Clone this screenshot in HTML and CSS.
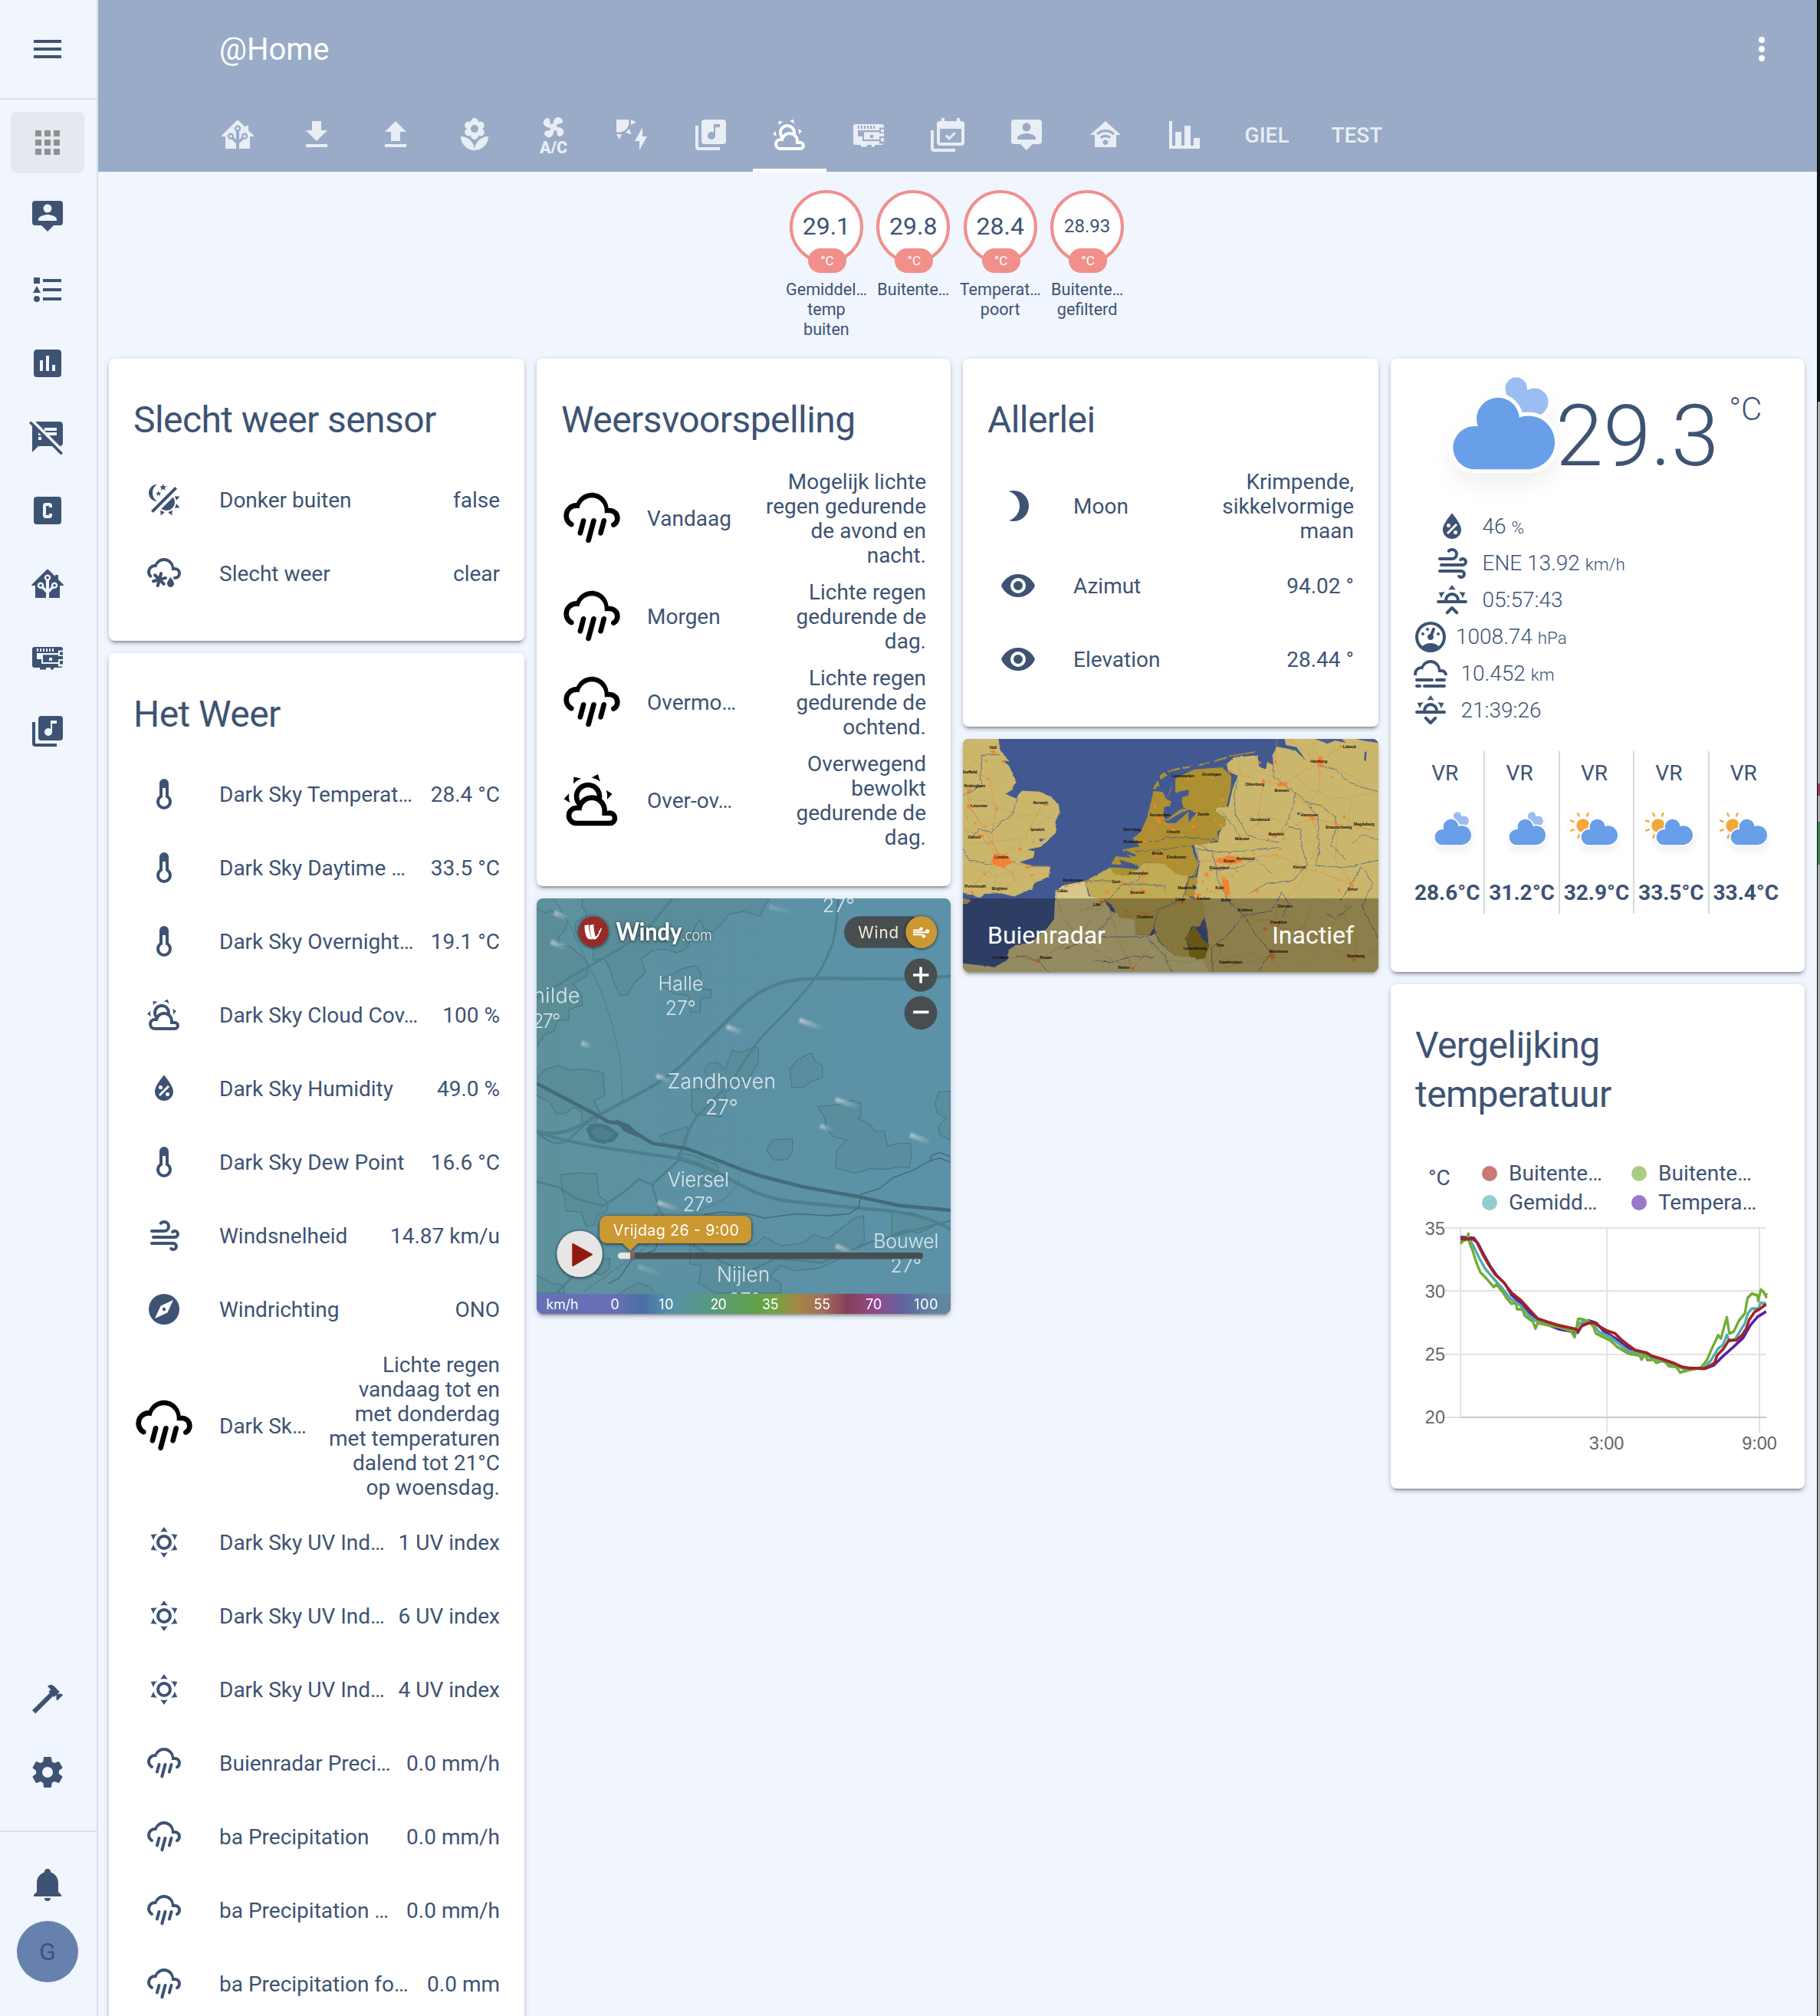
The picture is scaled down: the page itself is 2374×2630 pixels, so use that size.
FILE: index.html
```html
<!DOCTYPE html>
<html lang="nl">
<head>
<meta charset="utf-8">
<title>@Home</title>
<link rel="stylesheet" href="styles.css">
</head>
<body>
<svg class="sprite" aria-hidden="true">
<symbol id="menu" viewBox="0 0 24 24"><path d="M3,6H21V8H3V6M3,11H21V13H3V11M3,16H21V18H3V16Z"/></symbol>
<symbol id="apps" viewBox="0 0 24 24"><path d="M16,20H20V16H16M16,14H20V10H16M10,8H14V4H10M16,8H20V4H16M10,14H14V10H10M4,14H8V10H4M4,20H8V16H4M10,20H14V16H10M4,8H8V4H4V8Z"/></symbol>
<symbol id="account" viewBox="0 0 24 24"><path d="M20,2H4A2,2 0 0,0 2,4V16A2,2 0 0,0 4,18H8L12,22L16,18H20A2,2 0 0,0 22,16V4A2,2 0 0,0 20,2M12,4.3C13.5,4.3 14.7,5.5 14.7,7C14.7,8.5 13.5,9.7 12,9.7C10.5,9.7 9.3,8.5 9.3,7C9.3,5.5 10.5,4.3 12,4.3M18,15H6V14.1C6,12.1 10,11 12,11C14,11 18,12.1 18,14.1V15Z"/></symbol>
<symbol id="list" viewBox="0 0 24 24"><path d="M5,9.5L7.5,14H2.5L5,9.5M3,4H7V8H3V4M5,20A2,2 0 0,0 7,18A2,2 0 0,0 5,16A2,2 0 0,0 3,18A2,2 0 0,0 5,20M9,5V7H21V5H9M9,19H21V17H9V19M9,13H21V11H9V13Z"/></symbol>
<symbol id="poll" viewBox="0 0 24 24"><path d="M19,3H5C3.89,3 3,3.89 3,5V19A2,2 0 0,0 5,21H19A2,2 0 0,0 21,19V5C21,3.89 20.1,3 19,3M9,17H7V10H9V17M13,17H11V7H13V17M17,17H15V13H17V17Z"/></symbol>
<symbol id="notes-off" viewBox="0 0 24 24"><path d="M10.54 11l-.54-.54L7.54 8 6 6.46 2.38 2.84 1.27 1.73 0 3l2.01 2.01L2 22l4-4h9l5.73 5.73L22 22.46 17.54 18l-7-7zM8 14H6v-2h2v2zm-2-3V9l2 2H6zm14-9H4.08L10 7.92V6h8v2h-7.92l1 1H18v2h-4.92l6.99 6.99C21.14 17.95 22 17.08 22 16V4c0-1.1-.9-2-2-2z"/></symbol>
<symbol id="c-box" viewBox="0 0 24 24"><path d="M3,5A2,2 0 0,1 5,3H19A2,2 0 0,1 21,5V19A2,2 0 0,1 19,21H5A2,2 0 0,1 3,19V5M11,7A2,2 0 0,0 9,9V15A2,2 0 0,0 11,17H13A2,2 0 0,0 15,15V14H13V15H11V9H13V10H15V9A2,2 0 0,0 13,7H11Z"/></symbol>
<symbol id="hass" viewBox="0 0 24 24"><path d="M21.8,13H20V21H13V17.67L15.79,14.88L16.5,15C17.66,15 18.6,14.06 18.6,12.9C18.6,11.74 17.66,10.8 16.5,10.8A2.1,2.1 0 0,0 14.4,12.9L14.5,13.61L13,15.13V9.65C13.66,9.29 14.1,8.6 14.1,7.8A2.1,2.1 0 0,0 12,5.7A2.1,2.1 0 0,0 9.9,7.8C9.9,8.6 10.34,9.29 11,9.65V15.13L9.5,13.61L9.6,12.9A2.1,2.1 0 0,0 7.5,10.8A2.1,2.1 0 0,0 5.4,12.9A2.1,2.1 0 0,0 7.5,15L8.21,14.88L11,17.67V21H4V13H2.25C1.83,13 1.42,13 1.42,12.79C1.43,12.57 1.85,12.15 2.28,11.72L11,3C11.33,2.67 11.67,2.33 12,2.33C12.33,2.33 12.67,2.67 13,3L17,7V6H19V9L21.78,11.78C22.18,12.18 22.59,12.59 22.6,12.8C22.6,13 22.2,13 21.8,13M7.5,12A0.9,0.9 0 0,1 8.4,12.9A0.9,0.9 0 0,1 7.5,13.8A0.9,0.9 0 0,1 6.6,12.9A0.9,0.9 0 0,1 7.5,12M16.5,12C17,12 17.4,12.4 17.4,12.9C17.4,13.4 17,13.8 16.5,13.8A0.9,0.9 0 0,1 15.6,12.9A0.9,0.9 0 0,1 16.5,12M12,6.9C12.5,6.9 12.9,7.3 12.9,7.8C12.9,8.3 12.5,8.7 12,8.7C11.5,8.7 11.1,8.3 11.1,7.8C11.1,7.3 11.5,6.9 12,6.9Z"/></symbol>
<symbol id="card" viewBox="0 0 24 24"><path fill-rule="evenodd" d="M3.5,5H20.5A1.5,1.5 0 0,1 22,6.5V7.3H19V9H5V13H8V16H19V17.7H22V16.7A1.5,1.5 0 0,1 20.5,18.5H16V19.8H14V18.5H11V19.8H7V18.5H3.5A1.5,1.5 0 0,1 2,17V6.5A1.5,1.5 0 0,1 3.5,5M5,6V8H6V6M7,6V8H8V6M9,6V8H10V6M11,6V8H12V6M13,6V8H14V6M15,6V8H16V6M9,10.1H19V11H22V13H19V15H9M13,12V14H15V12M20,8.2H22V10.2H20M20,14H22V16.2H20Z"/></symbol>
<symbol id="music" viewBox="0 0 24 24"><path d="M4,6H2V20A2,2 0 0,0 4,22H18V20H4M18,7H15V12.5A2.5,2.5 0 0,1 12.5,15A2.5,2.5 0 0,1 10,12.5A2.5,2.5 0 0,1 12.5,10C13.07,10 13.58,10.19 14,10.5V5H18M20,2H8A2,2 0 0,0 6,4V16A2,2 0 0,0 8,18H20A2,2 0 0,0 22,16V4A2,2 0 0,0 20,2Z"/></symbol>
<symbol id="hammer" viewBox="0 0 24 24"><path d="M2,19.63L13.43,8.2L12.72,7.5L14.14,6.07L12,3.89C13.2,2.7 15.09,2.7 16.27,3.89L19.87,7.5L18.45,8.91H21.29L22,9.62L18.45,13.21L17.74,12.5V9.62L16.27,11.04L15.56,10.33L4.13,21.76L2,19.63Z"/></symbol>
<symbol id="cog" viewBox="0 0 24 24"><path d="M12,15.5A3.5,3.5 0 0,1 8.5,12A3.5,3.5 0 0,1 12,8.5A3.5,3.5 0 0,1 15.5,12A3.5,3.5 0 0,1 12,15.5M19.43,12.97C19.47,12.65 19.5,12.33 19.5,12C19.5,11.67 19.47,11.34 19.43,11L21.54,9.37C21.73,9.22 21.78,8.95 21.66,8.73L19.66,5.27C19.54,5.05 19.27,4.96 19.05,5.05L16.56,6.05C16.04,5.66 15.5,5.32 14.87,5.07L14.5,2.42C14.46,2.18 14.25,2 14,2H10C9.75,2 9.54,2.18 9.5,2.42L9.13,5.07C8.5,5.32 7.96,5.66 7.44,6.05L4.95,5.05C4.73,4.96 4.46,5.05 4.34,5.27L2.34,8.73C2.21,8.95 2.27,9.22 2.46,9.37L4.57,11C4.53,11.34 4.5,11.67 4.5,12C4.5,12.33 4.53,12.65 4.57,12.97L2.46,14.63C2.27,14.78 2.21,15.05 2.34,15.27L4.34,18.73C4.46,18.95 4.73,19.03 4.95,18.95L7.44,17.94C7.96,18.34 8.5,18.68 9.13,18.93L9.5,21.58C9.54,21.82 9.75,22 10,22H14C14.25,22 14.46,21.82 14.5,21.58L14.87,18.93C15.5,18.67 16.04,18.34 16.56,17.94L19.05,18.95C19.27,19.03 19.54,18.95 19.66,18.73L21.66,15.27C21.78,15.05 21.73,14.78 21.54,14.63L19.43,12.97Z"/></symbol>
<symbol id="bell" viewBox="0 0 24 24"><path d="M21,19V20H3V19L5,17V11C5,7.9 7.03,5.17 10,4.29C10,4.19 10,4.1 10,4A2,2 0 0,1 12,2A2,2 0 0,1 14,4C14,4.1 14,4.19 14,4.29C16.97,5.17 19,7.9 19,11V17L21,19M14,21A2,2 0 0,1 12,23A2,2 0 0,1 10,21"/></symbol>
<symbol id="dots" viewBox="0 0 24 24"><path d="M12,16A2,2 0 0,1 14,18A2,2 0 0,1 12,20A2,2 0 0,1 10,18A2,2 0 0,1 12,16M12,10A2,2 0 0,1 14,12A2,2 0 0,1 12,14A2,2 0 0,1 10,12A2,2 0 0,1 12,10M12,4A2,2 0 0,1 14,6A2,2 0 0,1 12,8A2,2 0 0,1 10,6A2,2 0 0,1 12,4Z"/></symbol>
<symbol id="download" viewBox="0 0 24 24"><path d="M5,20H19V18H5M19,9H15V3H9V9H5L12,16L19,9Z"/></symbol>
<symbol id="upload" viewBox="0 0 24 24"><path d="M9,16V10H5L12,3L19,10H15V16H9M5,20V18H19V20H5Z"/></symbol>
<symbol id="flower" viewBox="0 0 24 24"><path d="M3,13A9,9 0 0,0 12,22C12,17 7.97,13 3,13M12,5.5A2.5,2.5 0 0,1 14.5,8A2.5,2.5 0 0,1 12,10.5A2.5,2.5 0 0,1 9.5,8A2.5,2.5 0 0,1 12,5.5M5.6,10.25A2.5,2.5 0 0,0 8.1,12.75C8.63,12.75 9.12,12.58 9.5,12.31C9.5,12.37 9.5,12.43 9.5,12.5A2.5,2.5 0 0,0 12,15A2.5,2.5 0 0,0 14.5,12.5C14.5,12.43 14.5,12.37 14.5,12.31C14.88,12.58 15.37,12.75 15.9,12.75C17.28,12.75 18.4,11.63 18.4,10.25C18.4,9.25 17.81,8.4 16.97,8C17.81,7.6 18.4,6.74 18.4,5.75C18.4,4.37 17.28,3.25 15.9,3.25C15.37,3.25 14.88,3.41 14.5,3.69C14.5,3.63 14.5,3.56 14.5,3.5A2.5,2.5 0 0,0 12,1A2.5,2.5 0 0,0 9.5,3.5C9.5,3.56 9.5,3.63 9.5,3.69C9.12,3.41 8.63,3.25 8.1,3.25A2.5,2.5 0 0,0 5.6,5.75C5.6,6.74 6.19,7.6 7.03,8C6.19,8.4 5.6,9.25 5.6,10.25M12,22A9,9 0 0,0 21,13C16,13 12,17 12,22Z"/></symbol>
<symbol id="airco" viewBox="0 0 24 24"><path transform="translate(12 7) rotate(32) scale(.76) translate(-12 -12)" d="M12.5,2C17,2 17.11,5.57 14.75,6.75C13.76,7.24 13.32,8.29 13.13,9.22C13.61,9.42 14.03,9.73 14.35,10.13C18.05,8.13 22.03,8.92 22.03,12.5C22.03,17 18.46,17.1 17.28,14.73C16.78,13.74 15.72,13.3 14.79,13.11C14.59,13.59 14.28,14 13.88,14.34C15.87,18.03 15.08,22 11.5,22C7,22 6.91,18.42 9.27,17.24C10.25,16.75 10.69,15.71 10.89,14.79C10.4,14.59 9.97,14.27 9.65,13.87C5.96,15.85 2,15.07 2,11.5C2,7 5.56,6.89 6.74,9.26C7.24,10.25 8.29,10.68 9.22,10.87C9.41,10.39 9.73,9.97 10.14,9.65C8.15,5.96 8.94,2 12.5,2Z"/><text x="3" y="23.9" font-size="11" font-weight="900" textLength="18" lengthAdjust="spacingAndGlyphs">A/C</text></symbol>
<symbol id="solar" viewBox="0 0 24 24"><path d="M11.45,2V5.55L15,3.77L11.45,2M10.45,8L8,10.46L11.75,11.71L10.45,8M2,11.45L3.77,15L5.55,11.45H2M10,2H2V10C2.57,10.17 3.17,10.25 3.77,10.25C7.35,10.26 10.26,7.35 10.27,3.75C10.26,3.16 10.17,2.57 10,2M17,22V16H14L19,7V13H22L17,22Z"/></symbol>
<symbol id="partly" viewBox="0 0 24 24"><path d="M12.74,5.47C15.1,6.5 16.35,9.03 15.92,11.46C17.19,12.56 18,14.19 18,16V16.17C18.31,16.06 18.65,16 19,16A3,3 0 0,1 22,19A3,3 0 0,1 19,22H6A4,4 0 0,1 2,18A4,4 0 0,1 6,14H6.27C5,12.45 4.6,10.24 5.5,8.26C6.72,5.5 9.97,4.24 12.74,5.47M11.93,7.3C10.16,6.5 8.09,7.31 7.31,9.07C6.85,10.09 6.93,11.22 7.41,12.13C8.5,10.83 10.16,10 12,10C12.7,10 13.38,10.12 14,10.34C13.94,9.06 13.18,7.86 11.93,7.3M13.55,3.64C13,3.4 12.45,3.23 11.88,3.12L14.37,1.82L15.27,4.71C14.76,4.29 14.19,3.93 13.55,3.64M6.09,4.44C5.6,4.79 5.17,5.19 4.8,5.63L4.91,2.82L7.87,3.5C7.25,3.71 6.65,4.03 6.09,4.44M18,9.71C17.91,9.12 17.78,8.55 17.59,8L19.97,9.5L17.92,11.73C18.03,11.08 18.05,10.4 18,9.71M3.04,11.3C3.11,11.9 3.24,12.47 3.43,13L1.06,11.5L3.1,9.28C3,9.93 2.97,10.61 3.04,11.3M19,18H16V16A4,4 0 0,0 12,12A4,4 0 0,0 8,16H6A2,2 0 0,0 4,18A2,2 0 0,0 6,20H19A1,1 0 0,0 20,19A1,1 0 0,0 19,18Z"/></symbol>
<symbol id="calendar" viewBox="0 0 24 24"><path d="M21,17V8H7V17H21M21,3A2,2 0 0,1 23,5V17A2,2 0 0,1 21,19H7C5.89,19 5,18.1 5,17V5A2,2 0 0,1 7,3H8V1H10V3H18V1H20V3H21M17.53,11.06L13.09,15.5L10.41,12.82L11.47,11.76L13.09,13.38L16.47,10L17.53,11.06M3,21H17V23H3C1.89,23 1,22.1 1,21V9H3V21Z"/></symbol>
<symbol id="home-auto" viewBox="0 0 24 24"><path d="M12,3L2,12H5V20H19V12H22L12,3M12,8.5C14.34,8.5 16.46,9.43 18,10.94L16.8,12.12C15.58,10.91 13.88,10.17 12,10.17C10.12,10.17 8.42,10.91 7.2,12.12L6,10.94C7.54,9.43 9.66,8.5 12,8.5M12,11.83C13.4,11.83 14.67,12.39 15.6,13.3L14.4,14.47C13.79,13.87 12.94,13.5 12,13.5C11.06,13.5 10.21,13.87 9.6,14.47L8.4,13.3C9.33,12.39 10.6,11.83 12,11.83M12,15.17C12.94,15.17 13.7,15.91 13.7,16.83C13.7,17.75 12.94,18.5 12,18.5C11.06,18.5 10.3,17.75 10.3,16.83C10.3,15.91 11.06,15.17 12,15.17Z"/></symbol>
<symbol id="chart" viewBox="0 0 24 24"><path d="M22,21H2V3H4V19H6V10H10V19H12V6H16V19H18V14H22V21Z"/></symbol>
<symbol id="day-night" viewBox="0 0 24 24"><path d="M7.5,2C5.71,3.15 4.5,5.18 4.5,7.5C4.5,9.82 5.71,11.85 7.53,13C4.46,13 2,10.54 2,7.5A5.5,5.5 0 0,1 7.5,2M19.07,3.5L20.5,4.93L4.93,20.5L3.5,19.07L19.07,3.5M12.89,5.93L11.41,5L9.97,6L10.39,4.3L9,3.24L10.75,3.12L11.33,1.47L12,3.1L13.73,3.13L12.38,4.26L12.89,5.93M9.59,9.54L8.43,8.81L7.31,9.59L7.65,8.27L6.56,7.44L7.92,7.35L8.37,6.06L8.88,7.33L10.24,7.36L9.19,8.23L9.59,9.54M19,13.5A5.5,5.5 0 0,1 13.5,19C12.28,19 11.15,18.6 10.24,17.93L17.93,10.24C18.6,11.15 19,12.28 19,13.5M14.6,20.08L17.37,18.93L17.13,22.28L14.6,20.08M18.93,17.38L20.08,14.61L22.28,17.15L18.93,17.38M20.08,12.42L18.94,9.64L22.28,9.88L20.08,12.42M9.63,18.93L12.4,20.08L9.87,22.27L9.63,18.93Z"/></symbol>
<symbol id="snow-rain" viewBox="0 0 24 24"><path d="M18.5,18.67C18.5,19.96 17.5,21 16.25,21C15,21 14,19.96 14,18.67C14,17.12 16.25,14.5 16.25,14.5C16.25,14.5 18.5,17.12 18.5,18.67M4,17.36C3.86,16.82 4.18,16.25 4.73,16.11L7,15.5L5.33,13.86C4.93,13.46 4.93,12.81 5.33,12.4C5.73,12 6.4,12 6.79,12.4L8.45,14.05L9.04,11.8C9.18,11.24 9.75,10.92 10.29,11.07C10.85,11.21 11.17,11.78 11,12.33L10.42,14.58L12.67,14C13.22,13.83 13.79,14.15 13.93,14.71C14.08,15.25 13.76,15.82 13.2,15.96L10.95,16.55L12.6,18.21C13,18.6 13,19.27 12.6,19.67C12.2,20.07 11.54,20.07 11.15,19.67L9.5,18L8.89,20.27C8.75,20.83 8.18,21.14 7.64,21C7.08,20.86 6.77,20.29 6.91,19.74L7.5,17.5L5.26,18.09C4.71,18.23 4.14,17.92 4,17.36M1,11A5,5 0 0,1 6,6C7,3.65 9.3,2 12,2C15.43,2 18.24,4.66 18.5,8.03L19,8A4,4 0 0,1 23,12A4,4 0 0,1 19,16A1,1 0 0,1 18,15A1,1 0 0,1 19,14A2,2 0 0,0 21,12A2,2 0 0,0 19,10H17V9A5,5 0 0,0 12,4C9.5,4 7.45,5.82 7.06,8.19C6.73,8.07 6.37,8 6,8A3,3 0 0,0 3,11C3,11.85 3.35,12.61 3.91,13.16C4.27,13.55 4.26,14.16 3.88,14.54C3.5,14.93 2.85,14.93 2.47,14.54C1.56,13.63 1,12.38 1,11Z"/></symbol>
<symbol id="pouring" viewBox="0 0 24 24"><path d="M9,12C9.53,12.14 9.85,12.69 9.71,13.22L8.41,18.05C8.27,18.59 7.72,18.9 7.19,18.76C6.65,18.62 6.34,18.07 6.5,17.54L7.78,12.71C7.92,12.17 8.47,11.86 9,12M13,12C13.53,12.14 13.85,12.69 13.71,13.22L11.64,20.95C11.5,21.5 10.95,21.8 10.41,21.66C9.88,21.5 9.56,20.97 9.7,20.43L11.78,12.71C11.92,12.17 12.47,11.86 13,12M17,12C17.53,12.14 17.85,12.69 17.71,13.22L16.41,18.05C16.27,18.59 15.72,18.9 15.19,18.76C14.65,18.62 14.34,18.07 14.5,17.54L15.78,12.71C15.92,12.17 16.47,11.86 17,12M17,10V9A5,5 0 0,0 12,4C9.5,4 7.45,5.82 7.06,8.19C6.73,8.07 6.37,8 6,8A3,3 0 0,0 3,11C3,12.11 3.6,13.08 4.5,13.6V13.59C5,13.87 5.14,14.5 4.87,14.96C4.59,15.43 4,15.6 3.5,15.32V15.33C2,14.47 1,12.85 1,11A5,5 0 0,1 6,6C7,3.65 9.3,2 12,2C15.43,2 18.24,4.66 18.5,8.03L19,8A4,4 0 0,1 23,12C23,13.5 22.2,14.77 21,15.46V15.46C20.5,15.73 19.91,15.57 19.63,15.09C19.36,14.61 19.5,14 20,13.72V13.73C20.6,13.39 21,12.74 21,12A2,2 0 0,0 19,10H17Z"/></symbol>
<symbol id="thermo" viewBox="0 0 24 24"><path d="M17,17A5,5 0 0,1 12,22A5,5 0 0,1 7,17C7,15.36 7.79,13.91 9,13V5A3,3 0 0,1 12,2A3,3 0 0,1 15,5V13C16.21,13.91 17,15.36 17,17M11,8V14.17C9.83,14.58 9,15.69 9,17A3,3 0 0,0 12,20A3,3 0 0,0 15,17C15,15.69 14.17,14.58 13,14.17V8H11Z"/></symbol>
<symbol id="humidity" viewBox="0 0 24 24"><path fill-rule="evenodd" d="M12,3.25C12,3.25 6,10 6,14C6,17.32 8.69,20 12,20A6,6 0 0,0 18,14C18,10 12,3.25 12,3.25M14.47,9.97L15.53,11.03L9.53,17.03L8.47,15.97M9.75,10A1.25,1.25 0 0,1 11,11.25A1.25,1.25 0 0,1 9.75,12.5A1.25,1.25 0 0,1 8.5,11.25A1.25,1.25 0 0,1 9.75,10M14.25,14.5A1.25,1.25 0 0,1 15.5,15.75A1.25,1.25 0 0,1 14.25,17A1.25,1.25 0 0,1 13,15.75A1.25,1.25 0 0,1 14.25,14.5Z"/></symbol>
<symbol id="windy" viewBox="0 0 24 24"><path d="M4,10A1,1 0 0,1 3,9A1,1 0 0,1 4,8H12A2,2 0 0,0 14,6A2,2 0 0,0 12,4C11.45,4 10.95,4.22 10.59,4.59C10.2,5 9.56,5 9.17,4.59C8.78,4.2 8.78,3.56 9.17,3.17C9.9,2.45 10.9,2 12,2A4,4 0 0,1 16,6A4,4 0 0,1 12,10H4M19,12A1,1 0 0,0 20,11A1,1 0 0,0 19,10C18.72,10 18.47,10.11 18.29,10.29C17.9,10.68 17.27,10.68 16.88,10.29C16.5,9.9 16.5,9.27 16.88,8.88C17.42,8.34 18.17,8 19,8A3,3 0 0,1 22,11A3,3 0 0,1 19,14H5A1,1 0 0,1 4,13A1,1 0 0,1 5,12H19M18,18H4A1,1 0 0,1 3,17A1,1 0 0,1 4,16H18A3,3 0 0,1 21,19A3,3 0 0,1 18,22C17.17,22 16.42,21.66 15.88,21.12C15.5,20.73 15.5,20.1 15.88,19.71C16.27,19.32 16.9,19.32 17.29,19.71C17.47,19.89 17.72,20 18,20A1,1 0 0,0 19,19A1,1 0 0,0 18,18Z"/></symbol>
<symbol id="compass" viewBox="0 0 24 24"><path fill-rule="evenodd" d="M14.19,14.19L6,18L9.81,9.81L18,6M12,2A10,10 0 0,0 2,12A10,10 0 0,0 12,22A10,10 0 0,0 22,12A10,10 0 0,0 12,2M12,10.9A1.1,1.1 0 0,0 10.9,12A1.1,1.1 0 0,0 12,13.1A1.1,1.1 0 0,0 13.1,12A1.1,1.1 0 0,0 12,10.9Z"/></symbol>
<symbol id="sunny" viewBox="0 0 24 24"><path d="M12,7A5,5 0 0,1 17,12A5,5 0 0,1 12,17A5,5 0 0,1 7,12A5,5 0 0,1 12,7M12,9A3,3 0 0,0 9,12A3,3 0 0,0 12,15A3,3 0 0,0 15,12A3,3 0 0,0 12,9M12,2L14.39,5.42C13.65,5.15 12.84,5 12,5C11.16,5 10.35,5.15 9.61,5.42L12,2M3.34,7L7.5,6.65C6.9,7.16 6.36,7.78 5.94,8.5C5.5,9.24 5.25,10 5.11,10.79L3.34,7M3.36,17L5.12,13.23C5.26,14 5.53,14.78 5.95,15.5C6.37,16.24 6.91,16.86 7.5,17.37L3.36,17M20.65,7L18.88,10.79C18.74,10 18.47,9.23 18.05,8.5C17.63,7.78 17.1,7.15 16.5,6.64L20.65,7M20.64,17L16.5,17.36C17.09,16.85 17.62,16.22 18.04,15.5C18.46,14.77 18.73,14 18.87,13.21L20.64,17M12,22L9.59,18.56C10.33,18.83 11.14,19 12,19C12.82,19 13.63,18.83 14.37,18.56L12,22Z"/></symbol>
<symbol id="moon" viewBox="0 0 24 24"><path d="M9,2C7.95,2 6.95,2.16 6,2.46C10.06,3.73 13,7.5 13,12C13,16.5 10.06,20.27 6,21.54C6.95,21.84 7.95,22 9,22A10,10 0 0,0 19,12A10,10 0 0,0 9,2Z"/></symbol>
<symbol id="eye" viewBox="0 0 24 24"><path d="M12,9A3,3 0 0,0 9,12A3,3 0 0,0 12,15A3,3 0 0,0 15,12A3,3 0 0,0 12,9M12,17A5,5 0 0,1 7,12A5,5 0 0,1 12,7A5,5 0 0,1 17,12A5,5 0 0,1 12,17M12,4.5C7,4.5 2.73,7.61 1,12C2.73,16.39 7,19.5 12,19.5C17,19.5 21.27,16.39 23,12C21.27,7.61 17,4.5 12,4.5Z"/></symbol>
<symbol id="sunrise" viewBox="0 0 24 24"><path d="M3,12H7A5,5 0 0,1 12,7A5,5 0 0,1 17,12H21A1,1 0 0,1 22,13A1,1 0 0,1 21,14H3A1,1 0 0,1 2,13A1,1 0 0,1 3,12M15,12A3,3 0 0,0 12,9A3,3 0 0,0 9,12H15M12,2L14.39,5.42C13.65,5.15 12.84,5 12,5C11.16,5 10.35,5.15 9.61,5.42L12,2M3.34,7L7.5,6.65C6.9,7.16 6.36,7.78 5.94,8.5C5.5,9.24 5.25,10 5.11,10.79L3.34,7M20.65,7L18.88,10.79C18.74,10 18.47,9.23 18.05,8.5C17.63,7.78 17.1,7.15 16.5,6.64L20.65,7M12.71,16.3L15.82,19.41C16.21,19.8 16.21,20.43 15.82,20.82C15.43,21.21 14.8,21.21 14.41,20.82L12,18.41L9.59,20.82C9.2,21.21 8.57,21.21 8.18,20.82C7.79,20.43 7.79,19.8 8.18,19.41L11.29,16.3C11.5,16.1 11.74,16 12,16C12.26,16 12.5,16.1 12.71,16.3Z"/></symbol>
<symbol id="sunset" viewBox="0 0 24 24"><path d="M3,12H7A5,5 0 0,1 12,7A5,5 0 0,1 17,12H21A1,1 0 0,1 22,13A1,1 0 0,1 21,14H3A1,1 0 0,1 2,13A1,1 0 0,1 3,12M15,12A3,3 0 0,0 12,9A3,3 0 0,0 9,12H15M12,2L14.39,5.42C13.65,5.15 12.84,5 12,5C11.16,5 10.35,5.15 9.61,5.42L12,2M3.34,7L7.5,6.65C6.9,7.16 6.36,7.78 5.94,8.5C5.5,9.24 5.25,10 5.11,10.79L3.34,7M20.65,7L18.88,10.79C18.74,10 18.47,9.23 18.05,8.5C17.63,7.78 17.1,7.15 16.5,6.64L20.65,7M12.71,20.71L15.82,17.6C16.21,17.21 16.21,16.57 15.82,16.18C15.43,15.79 14.8,15.79 14.41,16.18L12,18.59L9.59,16.18C9.2,15.79 8.57,15.79 8.18,16.18C7.79,16.57 7.79,17.21 8.18,17.6L11.29,20.71C11.5,20.9 11.74,21 12,21C12.26,21 12.5,20.9 12.71,20.71Z"/></symbol>
<symbol id="gauge" viewBox="0 0 24 24"><path d="M12,2A10,10 0 0,0 2,12A10,10 0 0,0 12,22A10,10 0 0,0 22,12A10,10 0 0,0 12,2M12,4A8,8 0 0,1 20,12C20,14.4 19,16.5 17.3,18C15.9,16.7 14,16 12,16C10,16 8.2,16.7 6.7,18C5,16.5 4,14.4 4,12A8,8 0 0,1 12,4M14,5.89C13.62,5.9 13.26,6.15 13.1,6.54L11.81,9.77L11.71,10C11,10.13 10.41,10.6 10.14,11.26C9.73,12.29 10.23,13.45 11.26,13.86C12.29,14.27 13.45,13.77 13.86,12.74C14.12,12.08 14,11.32 13.57,10.76L13.67,10.5L14.96,7.29L14.97,7.26C15.17,6.75 14.92,6.17 14.41,5.96C14.28,5.91 14.15,5.89 14,5.89M10,6A1,1 0 0,0 9,7A1,1 0 0,0 10,8A1,1 0 0,0 11,7A1,1 0 0,0 10,6M7,9A1,1 0 0,0 6,10A1,1 0 0,0 7,11A1,1 0 0,0 8,10A1,1 0 0,0 7,9M17,9A1,1 0 0,0 16,10A1,1 0 0,0 17,11A1,1 0 0,0 18,10A1,1 0 0,0 17,9Z"/></symbol>
<symbol id="fog" viewBox="0 0 24 24"><path d="M3,15H13A1,1 0 0,1 14,16A1,1 0 0,1 13,17H3A1,1 0 0,1 2,16A1,1 0 0,1 3,15M16,15H21A1,1 0 0,1 22,16A1,1 0 0,1 21,17H16A1,1 0 0,1 15,16A1,1 0 0,1 16,15M1,12A5,5 0 0,1 6,7C7,4.65 9.3,3 12,3C15.43,3 18.24,5.66 18.5,9.03L19,9C21.19,9 22.97,10.76 23,13H21A2,2 0 0,0 19,11H17V10A5,5 0 0,0 12,5C9.5,5 7.45,6.82 7.06,9.19C6.73,9.07 6.37,9 6,9A3,3 0 0,0 3,12C3,12.35 3.06,12.69 3.17,13H1.1L1,12M3,19H5A1,1 0 0,1 6,20A1,1 0 0,1 5,21H3A1,1 0 0,1 2,20A1,1 0 0,1 3,19M8,19H21A1,1 0 0,1 22,20A1,1 0 0,1 21,21H8A1,1 0 0,1 7,20A1,1 0 0,1 8,19Z"/></symbol>
<symbol id="cloudy" viewBox="11 13 40 36"><g stroke="#fff" stroke-width="1.2"><path fill="#9bbdf2" transform="translate(17.65 1.7) scale(.6)" stroke-width="2" d="M47.7,35.4c0-4.6-3.7-8.2-8.2-8.2c-1,0-1.9,0.2-2.8,0.5c-0.3-3.4-3.1-6.2-6.6-6.2c-3.7,0-6.7,3-6.7,6.7c0,0.8,0.2,1.6,0.4,2.3c-0.3-0.1-0.7-0.1-1-0.1c-3.7,0-6.7,3-6.7,6.7c0,3.6,2.9,6.6,6.5,6.7l17.2,0C44.2,43.3,47.7,39.8,47.7,35.4z"/><path fill="#699fe9" stroke-width="2.4" paint-order="stroke" d="M47.7,35.4c0-4.6-3.7-8.2-8.2-8.2c-1,0-1.9,0.2-2.8,0.5c-0.3-3.4-3.1-6.2-6.6-6.2c-3.7,0-6.7,3-6.7,6.7c0,0.8,0.2,1.6,0.4,2.3c-0.3-0.1-0.7-0.1-1-0.1c-3.7,0-6.7,3-6.7,6.7c0,3.6,2.9,6.6,6.5,6.7l17.2,0C44.2,43.3,47.7,39.8,47.7,35.4z"/></g></symbol>
<symbol id="cloudy-small" viewBox="1 13 50 36"><use href="#cloudy" x="11" y="13" width="40" height="36"/></symbol>
<symbol id="cloudy-day" viewBox="1 13 50 36"><g transform="translate(17.7 27)"><circle r="5.8" fill="#f2a83b"/><g stroke="#f2a83b" stroke-width="1.6" stroke-linecap="round"><path transform="rotate(22)" d="M0-9V-11.5M-9 0H-11.5M-6.4-6.4L-8.1-8.1M-6.4 6.4L-8.1 8.1M0 9V11.5"/></g></g><path fill="#699fe9" stroke="#fff" stroke-width="2.4" paint-order="stroke" d="M47.7,35.4c0-4.6-3.7-8.2-8.2-8.2c-1,0-1.9,0.2-2.8,0.5c-0.3-3.4-3.1-6.2-6.6-6.2c-3.7,0-6.7,3-6.7,6.7c0,0.8,0.2,1.6,0.4,2.3c-0.3-0.1-0.7-0.1-1-0.1c-3.7,0-6.7,3-6.7,6.7c0,3.6,2.9,6.6,6.5,6.7l17.2,0C44.2,43.3,47.7,39.8,47.7,35.4z"/></symbol>
</svg>

<aside class="sidebar">
  <div class="sidebar-top"><svg class="icon"><use href="#menu"/></svg></div>
  <nav class="nav">
    <a class="nav-item active"><svg class="icon"><use href="#apps"/></svg></a>
    <a class="nav-item"><svg class="icon"><use href="#account"/></svg></a>
    <a class="nav-item"><svg class="icon"><use href="#list"/></svg></a>
    <a class="nav-item"><svg class="icon"><use href="#poll"/></svg></a>
    <a class="nav-item"><svg class="icon"><use href="#notes-off"/></svg></a>
    <a class="nav-item"><svg class="icon"><use href="#c-box"/></svg></a>
    <a class="nav-item"><svg class="icon"><use href="#hass"/></svg></a>
    <a class="nav-item"><svg class="icon"><use href="#card"/></svg></a>
    <a class="nav-item"><svg class="icon"><use href="#music"/></svg></a>
  </nav>
  <nav class="nav nav-tools">
    <a class="nav-item"><svg class="icon"><use href="#hammer"/></svg></a>
    <a class="nav-item"><svg class="icon"><use href="#cog"/></svg></a>
  </nav>
  <div class="user">
    <svg class="icon"><use href="#bell"/></svg>
    <div class="avatar">G</div>
  </div>
</aside>

<main class="main">
  <header class="header">
    <div class="toolbar"><h1 class="title">@Home</h1><svg class="icon"><use href="#dots"/></svg></div>
    <nav class="tabs">
      <a class="tab"><svg class="icon"><use href="#hass"/></svg></a>
      <a class="tab"><svg class="icon"><use href="#download"/></svg></a>
      <a class="tab"><svg class="icon"><use href="#upload"/></svg></a>
      <a class="tab"><svg class="icon"><use href="#flower"/></svg></a>
      <a class="tab"><svg class="icon"><use href="#airco"/></svg></a>
      <a class="tab"><svg class="icon"><use href="#solar"/></svg></a>
      <a class="tab"><svg class="icon"><use href="#music"/></svg></a>
      <a class="tab selected"><svg class="icon"><use href="#partly"/></svg></a>
      <a class="tab"><svg class="icon"><use href="#card"/></svg></a>
      <a class="tab"><svg class="icon"><use href="#calendar"/></svg></a>
      <a class="tab"><svg class="icon"><use href="#account"/></svg></a>
      <a class="tab"><svg class="icon"><use href="#home-auto"/></svg></a>
      <a class="tab"><svg class="icon"><use href="#chart"/></svg></a>
      <a class="tab label">GIEL</a>
      <a class="tab label">TEST</a>
    </nav>
  </header>

  <section class="badges">
    <div class="badge"><div class="circle">29.1<span class="unit">°C</span></div><div class="badge-name">Gemiddel…<br>temp<br>buiten</div></div>
    <div class="badge"><div class="circle">29.8<span class="unit">°C</span></div><div class="badge-name">Buitente…</div></div>
    <div class="badge"><div class="circle">28.4<span class="unit">°C</span></div><div class="badge-name">Temperat…<br>poort</div></div>
    <div class="badge"><div class="circle small">28.93<span class="unit">°C</span></div><div class="badge-name">Buitente…<br>gefilterd</div></div>
  </section>

  <section class="columns">
    <div class="column">
      <article class="card">
        <h2 class="card-title">Slecht weer sensor</h2>
        <div class="rows">
          <div class="row"><span class="badge-icon"><svg class="icon"><use href="#day-night"/></svg></span><span class="name">Donker buiten</span><span class="state">false</span></div>
          <div class="row"><span class="badge-icon"><svg class="icon"><use href="#snow-rain"/></svg></span><span class="name">Slecht weer</span><span class="state">clear</span></div>
        </div>
      </article>
      <article class="card">
        <h2 class="card-title">Het Weer</h2>
        <div class="rows">
          <div class="row"><span class="badge-icon"><svg class="icon"><use href="#thermo"/></svg></span><span class="name">Dark Sky Temperat…</span><span class="state">28.4 °C</span></div>
          <div class="row"><span class="badge-icon"><svg class="icon"><use href="#thermo"/></svg></span><span class="name">Dark Sky Daytime …</span><span class="state">33.5 °C</span></div>
          <div class="row"><span class="badge-icon"><svg class="icon"><use href="#thermo"/></svg></span><span class="name">Dark Sky Overnight…</span><span class="state">19.1 °C</span></div>
          <div class="row"><span class="badge-icon"><svg class="icon"><use href="#partly"/></svg></span><span class="name">Dark Sky Cloud Cov…</span><span class="state">100 %</span></div>
          <div class="row"><span class="badge-icon"><svg class="icon"><use href="#humidity"/></svg></span><span class="name">Dark Sky Humidity</span><span class="state">49.0 %</span></div>
          <div class="row"><span class="badge-icon"><svg class="icon"><use href="#thermo"/></svg></span><span class="name">Dark Sky Dew Point</span><span class="state">16.6 °C</span></div>
          <div class="row"><span class="badge-icon"><svg class="icon"><use href="#windy"/></svg></span><span class="name">Windsnelheid</span><span class="state">14.87 km/u</span></div>
          <div class="row"><span class="badge-icon"><svg class="icon"><use href="#compass"/></svg></span><span class="name">Windrichting</span><span class="state">ONO</span></div>
          <div class="row"><span class="badge-icon"><svg class="icon big"><use href="#pouring"/></svg></span><span class="name">Dark Sk…</span><span class="state">Lichte regen<br>vandaag tot en<br>met donderdag<br>met temperaturen<br>dalend tot 21°C<br>op woensdag.</span></div>
          <div class="row"><span class="badge-icon"><svg class="icon"><use href="#sunny"/></svg></span><span class="name">Dark Sky UV Ind…</span><span class="state">1 UV index</span></div>
          <div class="row"><span class="badge-icon"><svg class="icon"><use href="#sunny"/></svg></span><span class="name">Dark Sky UV Ind…</span><span class="state">6 UV index</span></div>
          <div class="row"><span class="badge-icon"><svg class="icon"><use href="#sunny"/></svg></span><span class="name">Dark Sky UV Ind…</span><span class="state">4 UV index</span></div>
          <div class="row"><span class="badge-icon"><svg class="icon"><use href="#pouring"/></svg></span><span class="name">Buienradar Preci…</span><span class="state">0.0 mm/h</span></div>
          <div class="row"><span class="badge-icon"><svg class="icon"><use href="#pouring"/></svg></span><span class="name">ba Precipitation</span><span class="state">0.0 mm/h</span></div>
          <div class="row"><span class="badge-icon"><svg class="icon"><use href="#pouring"/></svg></span><span class="name">ba Precipitation …</span><span class="state">0.0 mm/h</span></div>
          <div class="row"><span class="badge-icon"><svg class="icon"><use href="#pouring"/></svg></span><span class="name">ba Precipitation fo…</span><span class="state">0.0 mm</span></div>
        </div>
      </article>
    </div>

    <div class="column">
      <article class="card">
        <h2 class="card-title">Weersvoorspelling</h2>
        <div class="rows">
          <div class="row"><span class="badge-icon"><svg class="icon big"><use href="#pouring"/></svg></span><span class="name">Vandaag</span><span class="state">Mogelijk lichte<br>regen gedurende<br>de avond en<br>nacht.</span></div>
          <div class="row"><span class="badge-icon"><svg class="icon big"><use href="#pouring"/></svg></span><span class="name">Morgen</span><span class="state">Lichte regen<br>gedurende de<br>dag.</span></div>
          <div class="row"><span class="badge-icon"><svg class="icon big"><use href="#pouring"/></svg></span><span class="name">Overmo…</span><span class="state">Lichte regen<br>gedurende de<br>ochtend.</span></div>
          <div class="row"><span class="badge-icon"><svg class="icon big"><use href="#partly"/></svg></span><span class="name">Over-ov…</span><span class="state">Overwegend<br>bewolkt<br>gedurende de<br>dag.</span></div>
        </div>
      </article>
      <article class="card">
        <svg class="windy-map" viewBox="28 33 1512 1491" preserveAspectRatio="none">
          <defs>
            <linearGradient id="sea"><stop offset="0" stop-color="#5d929c"/><stop offset=".35" stop-color="#5c91a4"/><stop offset="1" stop-color="#5c92a8"/></linearGradient>
            <linearGradient id="scale"><stop offset="0" stop-color="#6770b6"/><stop offset=".19" stop-color="#6770b4"/><stop offset=".255" stop-color="#4a6ea6"/><stop offset=".32" stop-color="#5493a8"/><stop offset=".43" stop-color="#5a9a7d"/><stop offset=".52" stop-color="#5fa14c"/><stop offset=".575" stop-color="#6fa542"/><stop offset=".63" stop-color="#a58647"/><stop offset=".69" stop-color="#a2705c"/><stop offset=".75" stop-color="#854059"/><stop offset=".82" stop-color="#914b8d"/><stop offset=".885" stop-color="#5f63a0"/><stop offset=".95" stop-color="#5f84a0"/><stop offset="1" stop-color="#64879f"/></linearGradient>
            <linearGradient id="gust"><stop offset="0" stop-color="#e9e4e2" stop-opacity=".62"/><stop offset=".3" stop-color="#e9e4e2" stop-opacity=".4"/><stop offset="1" stop-color="#fff" stop-opacity="0"/></linearGradient>
            <filter id="soft" x="-30%" y="-30%" width="160%" height="160%"><feDropShadow dx="0" dy="2" stdDeviation="6" flood-opacity=".8"/></filter>
            <filter id="smear" x="-10%" y="-10%" width="120%" height="120%"><feGaussianBlur stdDeviation="2.5"/></filter>
          </defs>
          <rect x="28" y="33" width="1512" height="1491" fill="url(#sea)"/>
          <g fill="#57858f" fill-opacity=".38" stroke="#467783" stroke-width="3" stroke-linejoin="round">
            <path d="M195 33L193 62 212 92 170 118 168 150 205 190 235 215V255L275 248 297 290 308 330 333 382 360 380 385 335 425 300 412 250 450 220 500 215 540 228 575 215 590 180 605 140 625 108 640 145 670 155 705 125 730 90 785 80 845 97 860 60 878 33Z"/>
            <path d="M28 68L60 85 80 75 105 92 140 105 135 145 110 170 108 203 150 205 185 235 215 262 212 310 160 340 192 375 195 415 145 433V470L105 470 90 510 55 525 28 565"/>
            <path d="M485 320L535 300 560 285 605 274 627 295 628 345 635 358 665 360V390L627 392 625 443H590L583 382 530 375 490 350Z"/>
            <path d="M642 650C650 620 690 612 705 640L718 645 742 580 780 585 820 566 838 570V620L815 660 790 695H760L735 715 715 735V770L700 818 660 810H610L594 790V720L650 710 655 680Z"/>
            <path d="M952 645L985 610 1030 588 1042 612 1072 635V675L1030 690 1000 713 960 710Z"/>
            <path d="M1055 780L1130 773 1180 758 1212 768V810L1200 822 1240 840 1268 870 1298 868 1310 922 1345 912H1392L1398 960 1388 1000 1340 998 1310 1005 1245 1003 1190 1020 1120 1000 1125 935 1162 898 1115 890 1085 860 1080 820Z"/>
            <path d="M868 935L892 900 962 896V940L945 970 895 972Z"/>
            <path d="M1540 725L1497 727 1483 770 1492 805 1525 822 1495 850 1500 880 1540 900Z"/>
            <path d="M28 680L60 645 108 632 150 650 195 645 272 658V690L278 740 237 760 262 805 235 845H195L190 795 165 782 130 806 100 805 75 765 28 740"/>
            <path d="M117 1025L180 1018 248 1022 255 1100 290 1125 285 1155 250 1170 237 1207 207 1208 190 1158 135 1155 130 1110 120 1080Z"/>
            <path d="M475 885L520 870 580 852 578 885 570 935 500 920Z"/>
            <path d="M545 945L600 955 690 990 692 1020 640 1055 605 1040 650 1005 545 970Z"/>
            <path d="M587 1250V1345L630 1350 620 1415 680 1450 H920V1415L880 1390 920 1350 970 1370 1060 1360 1150 1320 1225 1265 1222 1172 1190 1180 1090 1255 1040 1240 1000 1270 920 1280 860 1248 820 1280Z"/>
            <path d="M1325 1155L1400 1162 1482 1190 1480 1210 1420 1235 1380 1222 1325 1240Z"/>
            <path d="M330 1450L400 1412 440 1425 460 1450M28 1385L85 1415 130 1420V1450H28"/>
            <path d="M240 1330L295 1325V1360L265 1385 240 1380"/>
          </g>
          <g fill="none" stroke="#4d7f8e" stroke-linecap="round" stroke-linejoin="round">
            <path stroke-width="12" d="M28 870C100 885 150 870 210 835L340 765C420 725 490 690 560 630L740 455C800 395 860 345 960 328C1050 315 1150 322 1400 322L1540 312"/>
            <path stroke-width="8" d="M28 390L170 305 330 215C400 170 440 140 480 85L525 33M1130 33C1122 120 1122 170 1100 215C1070 300 1030 340 950 430L850 530C800 590 780 630 740 690L610 820C570 880 560 930 545 975L450 1060 475 1150 500 1190"/>
            <path stroke-width="12" d="M28 870C100 900 250 925 360 940L540 965C640 985 690 1020 790 1070C860 1105 900 1115 1000 1125L1320 1155C1420 1165 1480 1190 1540 1220"/>
            <path stroke-width="8" d="M28 870C80 925 130 920 160 885L200 850M28 1050L110 1070 170 1110 270 1138 350 1085 400 1040 450 1060M470 1160L420 1230 330 1270M600 1280L700 1335 800 1375 900 1325 1070 1340 1240 1270 1400 1225 1540 1190M100 1450L180 1370"/>
            <path stroke-width="3" d="M90 33L150 130 215 270 270 380 300 470 335 620 342 765M770 1015C765 1100 690 1130 590 1165M200 1445L420 1290 500 1190"/>
          </g>
          <g fill="none" stroke="#446b7b" stroke-linejoin="round">
            <path stroke-width="13" d="M28 697L250 812 290 835 330 840 370 862 450 912 570 930C680 965 760 1005 850 1030L1000 1068 1210 1105 1350 1135 1540 1152"/>
            <path stroke-width="10" d="M320 832L365 850 400 885 350 865Z"/>
            <path stroke-width="4" d="M290 1415L330 1395 375 1330 460 1295 470 1270M640 1168L700 1158 800 1165 860 1180 900 1175 980 1165 1090 1172 1170 1165 1205 1140 1212 1095 1280 1075 1330 1035 1400 1010 1465 975 1470 955 1500 945 1540 960M1465 975L1500 965 1540 980"/>
          </g>
          <path fill="#457483" d="M208 860C230 835 265 838 290 850L330 878 310 905 270 915 225 900Z"/><path fill="#4e7f8e" d="M225 868L262 852 310 878 285 900 245 895Z"/>
          <g fill="url(#gust)" filter="url(#smear)">
            <rect x="0" y="-9" width="60" height="17" transform="translate(92 85) rotate(22)"/><rect x="0" y="-9" width="65" height="17" transform="translate(80 190) rotate(20)"/><rect x="0" y="-9" width="38" height="18" transform="translate(192 552) rotate(18)"/><rect x="0" y="-9" width="64" height="17" transform="translate(722 494) rotate(20)"/><rect x="0" y="-9" width="90" height="17" transform="translate(988 470) rotate(20)"/><rect x="0" y="-9" width="60" height="17" transform="translate(465 670) rotate(20)"/><rect x="0" y="-9" width="90" height="17" transform="translate(1120 755) rotate(18)"/><rect x="0" y="-9" width="45" height="17" transform="translate(1064 850) rotate(18)"/><rect x="0" y="-9" width="80" height="17" transform="translate(1392 882) rotate(20)"/><rect x="0" y="-9" width="80" height="17" transform="translate(470 1125) rotate(18)"/><rect x="0" y="-9" width="80" height="17" transform="translate(1120 1280) rotate(22)"/><rect x="0" y="-9" width="90" height="16" opacity=".5" transform="translate(398 1355) rotate(18)"/><rect x="0" y="-9" width="90" height="16" opacity=".4" transform="translate(878 64) rotate(14)"/>
          </g>
          <g class="places" fill="#fff" fill-opacity=".78">
            <text x="1072" y="82" font-size="72" textLength="118">27°</text>
            <text x="472" y="362" font-size="70" textLength="165">Halle</text><text x="498" y="450" font-size="70" textLength="112">27°</text>
            <text x="-14" y="406" font-size="74" textLength="200">rhilde</text><text x="12" y="498" font-size="70" textLength="104">27°</text>
            <text x="506" y="714" font-size="74" textLength="396">Zandhoven</text><text x="644" y="808" font-size="74" textLength="120">27°</text>
            <text x="506" y="1066" font-size="72" textLength="225">Viersel</text><text x="562" y="1155" font-size="70" textLength="112">27°</text>
            <text x="1258" y="1287" font-size="70" textLength="238">Bouwel</text><text x="1320" y="1375" font-size="70" textLength="114">27°</text>
            <text x="686" y="1408" font-size="74" textLength="194">Nijlen</text><text x="728" y="1499" font-size="72" textLength="116">27°</text>
          </g>
          <g filter="url(#soft)"><circle cx="235" cy="152" r="54" fill="#992b2b"/><text class="windy-name" x="318" y="185" font-size="88" font-weight="700" fill="#fff" textLength="350" lengthAdjust="spacingAndGlyphs">Windy<tspan font-size="58" font-weight="300">.com</tspan></text></g>
          <path fill="#fff" d="M203 130L218 127C220 150 222 165 230 174 222 182 212 178 208 165 204 153 203 142 203 130M222 129L236 126C237 148 240 165 246 177 240 183 232 180 227 168 223 155 222 142 222 129"/><path fill="none" stroke="#fff" stroke-width="4" d="M212 172C232 188 255 172 264 140M238 180C252 172 258 160 258 148"/>
          <rect x="1151" y="97" width="300" height="114" rx="57" fill="#474e50"/><text class="ui" x="1202" y="175" font-size="58" fill="#f5ecd9" textLength="148">Wind</text>
          <circle cx="1433" cy="154" r="57" fill="#cb9833" filter="url(#soft)"/>
          <g stroke="#fff" stroke-width="5.5" fill="none"><path d="M1403 147H1430M1403 155H1452M1403 163H1438"/></g><g fill="#fff"><circle cx="1432" cy="143" r="6.5"/><circle cx="1455" cy="151" r="7.5"/><circle cx="1442" cy="169" r="6.5"/></g>
          <circle cx="1431" cy="308" r="60" fill="#474e50"/><circle cx="1431" cy="444" r="60" fill="#474e50"/><path stroke="#fff" stroke-width="10" d="M1403 308H1460M1431 279V337M1403 441H1460"/>
          <rect x="325" y="1304" width="1114" height="23" rx="11" fill="#474e50"/><path fill="#e5e5e5" d="M370 1304H336A11 11 0 0 0 336 1327H370Z"/><path fill="#8e6257" d="M370 1304H386V1327H370Z"/>
          <g filter="url(#soft)"><path fill="#cb9833" d="M286 1172H784A28 28 0 0 1 812 1200V1244A28 28 0 0 1 784 1271H398L370 1297 342 1271H286A28 28 0 0 1 258 1244V1200A28 28 0 0 1 286 1172"/><circle cx="185" cy="1309" r="83" fill="#e6e6e6"/></g>
          <text class="ui" x="307" y="1244" font-size="55" fill="#fff" textLength="460">Vrijdag 26 - 9:00</text><path fill="#93190f" stroke="#93190f" stroke-linejoin="round" stroke-width="5" d="M160 1273L230 1311 160 1351Z"/>
          <rect x="28" y="1452" width="1512" height="72" fill="url(#scale)"/>
          <g class="ui" fill="#fff" font-size="50"><text x="63" y="1508" textLength="118">km/h</text><text x="298" y="1508">0</text><text x="474" y="1508" textLength="54">10</text><text x="662" y="1508" textLength="60">20</text><text x="851" y="1508" textLength="61">35</text><text x="1040" y="1508" textLength="61">55</text><text x="1230" y="1508" textLength="59">70</text><text x="1406" y="1508" textLength="88">100</text></g>
        </svg>
      </article>
    </div>

    <div class="column">
      <article class="card">
        <h2 class="card-title">Allerlei</h2>
        <div class="rows">
          <div class="row"><span class="badge-icon"><svg class="icon"><use href="#moon"/></svg></span><span class="name">Moon</span><span class="state">Krimpende,<br>sikkelvormige<br>maan</span></div>
          <div class="row"><span class="badge-icon"><svg class="icon"><use href="#eye"/></svg></span><span class="name">Azimut</span><span class="state">94.02 °</span></div>
          <div class="row"><span class="badge-icon"><svg class="icon"><use href="#eye"/></svg></span><span class="name">Elevation</span><span class="state">28.44 °</span></div>
        </div>
      </article>
      <article class="card picture">
        <svg class="radar-map" viewBox="3 6 1559 911" preserveAspectRatio="none">
          <defs>
            <filter id="coast" x="-5%" y="-5%" width="110%" height="110%"><feTurbulence type="fractalNoise" baseFrequency=".09" numOctaves="2" seed="4"/><feDisplacementMap in="SourceGraphic" scale="7" xChannelSelector="R" yChannelSelector="G"/></filter>
            <filter id="wander" x="-5%" y="-5%" width="110%" height="110%"><feTurbulence type="fractalNoise" baseFrequency=".05" numOctaves="2" seed="9"/><feDisplacementMap in="SourceGraphic" scale="13" xChannelSelector="R" yChannelSelector="G"/></filter>
          </defs>
          <rect x="3" y="6" width="1559" height="911" fill="#425890"/>
          <g filter="url(#coast)">
          <g fill="#cbb76c">
            <path d="M-20 -20H133L143 50 178 95 150 88 175 110 190 140 202 175 188 205 162 220 205 240 210 225 225 208 290 212 335 232 360 262 367 290 350 330 352 372 320 405 290 432 245 440 272 445 268 470 215 488 265 497 255 505 330 505 325 545 270 570 265 590 195 622 140 608 85 612 68 627 -20 600Z"/>
            <path d="M1205 -20L1215 30 1255 38 1290 90 1250 50 1180 36 1165 70 1168 110 1145 95 1140 125 1115 115 1108 70 1020 78 992 105 1000 135 1035 150 1015 200 1000 270 950 275 955 300 990 320 965 375 960 410 870 420 890 500 880 560 870 620 905 680 920 750 925 820 900 860 890 945H1590V-20Z"/>
            <path d="M-20 625L35 635 20 650 -20 655Z"/>
          </g>
          <path fill="#425890" d="M1215 0H1420L1440 22 1400 12 1370 25 1310 0M1460 0H1562V22L1500 12Z" opacity=".9"/>
          <path fill="#d6c88a" d="M350 600L380 578 460 562 475 620 530 632 560 680 650 710 655 770 710 775 735 760 800 850 900 865 940 945H-20V880L120 898 170 870 175 830 200 812 260 800 320 745 345 710Z"/>
          <path fill="#c0ab56" d="M460 562L557 508 600 540 660 515 680 490 760 490 800 530 850 545 835 590 850 625 905 640 910 700 890 740 860 740 840 790 860 862 805 855 735 800 720 740 705 770 650 772 648 712 590 705 560 655 530 632 480 622Z"/>
          <g fill="#ac9030">
            <path d="M718 210L752 213 765 240 785 250 780 268 758 272 755 305 765 322 820 280 850 278 850 330 880 295 822 270 825 235 850 225 800 215 800 160 870 125 975 117 1010 150 1008 200 992 270 955 275 950 290 985 310 990 345 955 370 965 400 910 418 862 420 870 460 888 495 875 540 850 545 800 530 760 495 690 488 665 505 560 495 575 465 635 470 600 440 665 425 640 395 670 370 695 310Z"/>
            <path d="M557 508L600 510 655 515 625 540 570 535ZM850 550L880 545 885 570 862 580 876 600 870 622 835 622 840 590ZM718 195L735 168 740 185 722 205ZM740 150L760 135 770 150 745 165ZM770 130L815 118 820 124 775 136ZM825 116L865 112 850 120 825 122ZM885 108L925 96 930 100 890 112ZM945 92L990 76 995 80 950 96ZM1000 72L1100 54 1098 60 1002 76Z"/>
          </g>
          <path fill="#425890" d="M755 322L770 325 830 290 858 282 840 300 800 335 770 335ZM790 250L822 240 830 275 790 290ZM808 212L850 205 850 228 815 225ZM590 478L660 500 650 508 600 498ZM610 440L655 460 645 466 612 452ZM1510 60L1518 55 1515 95 1508 88ZM1257 295L1268 292 1265 303 1257 302ZM245 438L310 425 300 440ZM288 400L312 395 295 408ZM215 490L275 492 270 503Z"/>
          <path fill="#947d20" d="M870 736L895 770 900 790 928 810 912 862 880 868 850 850 855 815 835 788Z"/>
          </g>
          <g filter="url(#wander)">
          <g fill="none" stroke="#e0824a" stroke-width="2.4" opacity=".75">
            <path d="M25 270L80 350 145 480 60 560 15 610M145 480L240 500 330 505M145 480L200 560 140 605M145 480L110 400 125 280 100 160 30 130M145 480L230 400 300 265M3 360L70 385 145 480M3 150L20 205 27 270 60 320M145 480L30 490"/>
            <path d="M680 400L735 325 790 185M735 325L800 360 865 350 975 340M800 360L725 460 680 540 670 605 545 640 440 680M725 460L810 490 880 620 820 645 670 605 605 570 460 562M810 490L950 480 1060 470 1180 460 1290 510 1465 575M865 350L880 290 940 160 850 165M940 200L975 245M950 480L985 590 1055 690 1180 740 1160 855 985 900M985 590L885 615M1130 170L1110 335 1165 385 1315 315 1410 340 1535 360M1130 170L1205 185 1340 95 1420 38M1205 185L1300 270 1315 315 1340 420 1290 510 1265 580 1185 660 1160 740M1340 95L1340 200 1300 270M1340 95L1460 150 1562 240M1010 130L1100 165M1040 395L1115 335M1050 400L980 480M1180 740L1300 760 1380 820 1470 865 1562 830M1160 860L1200 917M1310 660L1280 740 1240 800M1465 575L1430 690 1480 800 1470 865M545 640L600 700 690 690 820 645M545 640L430 780 290 870 180 860M545 640L590 800 640 905M430 780L370 680 350 600 440 570M720 800L640 905 540 860 430 780M960 800L820 645M960 800L985 900M1410 340L1400 480 1465 575M1180 6L1175 90 1205 185M1230 10L1340 95 1310 6"/>
          </g>
          <g fill="none" stroke="#a0935f" stroke-width="1.6" stroke-dasharray="9 4">
            <path d="M3 60L60 100 90 140 130 170M30 240L90 250 180 290M40 300L90 350 150 330M180 290L230 310 300 300 350 320M30 420L90 410 190 400 230 380M60 510L130 540 200 520M130 540L120 600M870 180L900 230 990 240M940 130L960 220M790 400L740 440M1030 80L1050 150M1190 110L1250 50M1290 400L1350 420 1430 500M1035 325L1110 300 1210 330M1240 140L1300 200 1400 240 1530 220M1460 240L1450 330 1540 330M880 680L980 640 1080 660M1100 720L1230 700 1300 760M1290 620L1380 650 1430 600M1220 430L1260 480 1240 540M970 870L1100 840M1360 790L1330 860 1260 900M600 790L640 850M760 870L840 880 900 870"/>
          </g>
          <g fill="none" stroke="#3f558c" stroke-opacity=".85" stroke-width="2.4" stroke-linejoin="round">
            <path d="M75 70L70 190 3 225M75 70L140 68M205 240L190 300 150 330 110 370 60 360 35 395M3 430L25 480 60 485 100 497 160 485 200 490"/>
            <path d="M880 440L890 500 850 560 830 630 735 675 720 745 740 800 800 855M1005 140L1030 170 1020 230 1025 300 1070 380 1120 400 1190 410M1165 110L1170 155 1250 215 1290 250 1335 310 1340 450 1325 500 1430 510 1562 480M1250 215L1245 260 1215 345 1270 360 1275 430 1295 500 1240 560 1140 570 1080 610M890 420L940 450 960 560 1000 640 1055 695 1160 680 1200 605 1225 650 1200 700M1055 695L1100 770 1160 840 1110 917M1290 250L1350 270 1400 310 1405 350 1385 420 1440 480M1460 660L1400 710 1370 690M1055 695L990 780 935 820 940 917M1340 110L1400 125 1450 175 1562 215M1420 640L1500 505 1540 570 1500 660 1562 790M460 560L560 560M600 575L680 575 760 580 765 610M545 640L570 690 490 780 380 830M490 870L560 880 640 855 720 860M200 855L245 855 290 880 325 917M520 780L690 780 760 850 790 917"/>
            <path d="M640 410L740 405 770 390 880 395 950 400M650 445L740 440 840 425 900 440 1010 450 1100 440 1190 430"/>
            <path stroke-width="2" d="M680 520L660 560 600 575 545 640M930 520L1040 510 1100 475 1165 535M965 280L1020 350 1050 400M1460 420L1500 380 1562 400M1200 360L1215 345"/>
          </g>
          <g fill="#f08336" stroke="#f08336" stroke-width="5" stroke-dasharray="4 6">
            <path d="M112 468L122 455 162 458 178 472 182 492 158 508 132 503 114 490ZM958 474L1000 463 1045 470 1052 486 1010 495 955 490ZM908 530L926 524 922 550 908 542ZM976 546L998 556 1004 600 996 620 978 598ZM1330 92L1344 72 1355 94 1344 116 1334 108ZM1184 177L1212 182 1216 192 1190 189ZM727 317L750 322 747 332 730 328ZM668 602L686 594 686 608 670 611ZM515 642L534 634 526 650 518 651ZM22 264L36 264 33 279 22 278ZM668 682L692 682 692 692 676 690ZM1153 851L1170 843 1167 870 1156 863ZM1463 863L1476 870 1468 881ZM1303 308L1325 316 1316 324ZM1400 332L1409 340 1406 355ZM110 54L127 57 125 63 112 62ZM668 402L697 404 692 409 670 408ZM675 537L687 533 687 545 677 545ZM1178 736L1192 732 1187 742 1177 745ZM878 614L897 616 888 625 880 623ZM63 382L79 380 76 389 66 389ZM20 202L32 202 28 212 18 210ZM804 487L812 490 810 498ZM285 867L292 871 286 882 281 878ZM600 567L609 563 608 573Z"/>
          </g>
          <path fill="#f08336" d="M860 345h12v12h-12zM970 240h12v10h-12zM970 335h8v14h-8zM935 155h8v10h-8zM845 160h10v6h-10zM1126 165h10v14h-10zM1172 90h8v12h-8zM305 262h14v8h-14zM255 535h14v8h-14zM360 290h7v12h-7zM126 275h9v14h-9zM240 505h26v7h-26zM1200 175h20v14h-20zM1190 430h8v12h-8zM1205 390h10v8h-10zM1165 380h16v12h-16zM540 600h12v12h-12zM725 455h8v10h-8zM755 467h9v7h-9zM720 262h6v10h-6zM665 372h8v8h-8zM688 380h8v9h-8zM815 380h16v5h-16zM610 675h18v12h-18zM815 640h20v10h-20zM1000 132h10v8h-10zM1110 95h12v8h-12zM1385 150h10v8h-10zM1325 470h8v10h-8zM1460 570h10v14h-10zM1410 590h9v12h-9zM1100 590h12v14h-12zM635 900h10v8h-10zM1050 688h10v8h-10zM30 600h14v12h-14zM85 90h8v10h-8zM150 92h10v7h-10zM90 155h10v9h-10zM85 340h6v12h-6zM215 430h6v12h-6zM265 400h6v10h-6zM380 580h12v6h-12zM430 568h14v6h-14zM1415 32h14v8h-14zM1130 745h12v10h-12zM1525 770h8v8h-8zM700 345h7v8h-7zM712 360h6v8h-6zM790 355h10v6h-10zM945 320h9v8h-9zM810 430h8v7h-8zM1010 535h8v8h-8zM1025 520h8v7h-8zM915 590h9v8h-9zM900 560h7v7h-7zM100 410h6v8h-6zM60 430h6v6h-6zM190 530h8v7h-8zM80 530h8v7h-8zM15 310h7v8h-7zM45 330h7v7h-7zM1090 450h8v7h-8zM1145 395h9v8h-9zM1345 265h9v8h-9zM1430 305h9v9h-9z"/>
          </g>
          <g class="map-labels" font-size="15.5" text-anchor="middle">
            <text x="116" y="46">Hull</text><text x="26" y="140">Sheffield</text><text x="47" y="195">Nottingham</text><text x="64" y="274">Leicester</text><text x="294" y="260">Norwich</text><text x="283" y="367">Ipswich</text><text x="45" y="395">Oxford</text><text x="147" y="474">London</text><text x="49" y="587">Portsmouth</text><text x="140" y="597">Brighton</text><text x="415" y="562">Dunkerque</text><text x="376" y="606">Calais</text><text x="505" y="660">Lille</text><text x="144" y="865">Le Havre</text><text x="314" y="865">Rouen</text><text x="607" y="904">Reims</text>
            <text x="829" y="155">Leeuwarden</text><text x="936" y="150">Groningen</text><text x="742" y="309">Amsterdam</text><text x="905" y="305">Zwolle</text><text x="638" y="367">Den Haag</text><text x="792" y="374">Utrecht</text><text x="641" y="413">Rotterdam</text><text x="732" y="458">Breda</text><text x="804" y="475">Eindhoven</text><text x="661" y="536">Antwerpen</text><text x="577" y="570">Gent</text><text x="657" y="610">Brussel</text><text x="844" y="594">Maastricht</text><text x="819" y="637">Liège</text><text x="905" y="636">Aachen</text><text x="686" y="706">Charleroi</text><text x="874" y="831">Luxembourg</text>
            <text x="1453" y="42">Lübeck</text><text x="1338" y="100">Hamburg</text><text x="1098" y="190">Oldenburg</text><text x="1199" y="212">Bremen</text><text x="1118" y="327">Osnabrück</text><text x="1303" y="308">Hannover</text><text x="1413" y="357">Braunschweig</text><text x="1508" y="345">Magdeburg</text><text x="1178" y="385">Bielefeld</text><text x="1051" y="402">Münster</text><text x="1002" y="488">Essen</text><text x="1063" y="481">Dortmund</text><text x="965" y="516">Düsseldorf</text><text x="1265" y="511">Kassel</text><text x="966" y="592">Köln</text><text x="990" y="642">Bonn</text><text x="1465" y="600">Erfurt</text><text x="1062" y="680">Koblenz</text><text x="1211" y="666">Giessen</text><text x="1187" y="728">Frankfurt</text><text x="968" y="819">Trier</text><text x="1187" y="843">Mannheim</text><text x="1007" y="885">Saarbrücken</text><text x="1477" y="861">Nürnberg</text>
          </g>
        </svg>
        <div class="picture-footer"><span>Buienradar</span><span>Inactief</span></div>
      </article>
    </div>

    <div class="column">
      <article class="card weather">
        <div class="current">
          <svg class="cloud-icon"><use href="#cloudy"/></svg>
          <span class="temp">29.3</span><span class="deg">°C</span>
        </div>
        <div class="details">
          <div class="detail first"><svg class="icon"><use href="#humidity"/></svg><span>46 <small>%</small></span></div>
          <div class="detail first"><svg class="icon"><use href="#windy"/></svg><span>ENE 13.92 <small>km/h</small></span></div>
          <div class="detail first"><svg class="icon"><use href="#sunrise"/></svg><span>05:57:43</span></div>
          <div class="detail tight"><svg class="icon"><use href="#gauge"/></svg><span>1008.74 <small>hPa</small></span></div>
          <div class="detail"><svg class="icon"><use href="#fog"/></svg><span>10.452 <small>km</small></span></div>
          <div class="detail"><svg class="icon"><use href="#sunset"/></svg><span>21:39:26</span></div>
        </div>
        <div class="forecast">
          <div class="day"><span class="day-name">VR</span><svg class="day-icon"><use href="#cloudy-small"/></svg><b>28.6°C</b></div>
          <div class="day"><span class="day-name">VR</span><svg class="day-icon"><use href="#cloudy-small"/></svg><b>31.2°C</b></div>
          <div class="day"><span class="day-name">VR</span><svg class="day-icon sun"><use href="#cloudy-day"/></svg><b>32.9°C</b></div>
          <div class="day"><span class="day-name">VR</span><svg class="day-icon sun"><use href="#cloudy-day"/></svg><b>33.5°C</b></div>
          <div class="day"><span class="day-name">VR</span><svg class="day-icon sun"><use href="#cloudy-day"/></svg><b>33.4°C</b></div>
        </div>
      </article>
      <article class="card graph">
        <h2 class="card-title">Vergelijking temperatuur</h2>
        <div class="legend">
          <span class="legend-unit">°C</span>
          <span class="legend-item"><i class="dot red"></i>Buitente…</span><span class="legend-item"><i class="dot green"></i>Buitente…</span>
          <span class="legend-item"><i class="dot teal"></i>Gemidd…</span><span class="legend-item"><i class="dot purple"></i>Tempera…</span>
        </div>
        <svg class="plot" viewBox="1814 1586 540 356">
          <g stroke="#000" stroke-opacity=".11" stroke-width="2"><path d="M1885 1602H2304M1885 1684H2304M1885 1767H2304M1885 1849H2304M1905 1602V1849M2096 1602V1869M2295 1602V1869"/><path d="M1905 1849H2304"/></g>
          <g transform="translate(1800 1280) scale(.36607 .43367)" fill="none" stroke-width="9" stroke-linejoin="round">
            <path stroke="#5a1fa8" d="M287 770L335 773 350 790 370 822 395 860 415 884 445 910 470 945 500 968 535 1000 560 1020 600 1034 640 1047 675 1052 705 1057 720 1035 745 1021 770 1028 800 1055 840 1075 870 1095 905 1115 950 1122 990 1138 1050 1154 1090 1164 1160 1165 1190 1155 1220 1130 1260 1100 1295 1072 1320 1035 1345 1010 1376 994"/>
            <path stroke="#50adb0" d="M287 776L320 776 335 800 355 835 375 865 400 890 430 918 465 955 500 975 530 1005 560 1024 600 1032 650 1043 695 1050 712 1028 740 1022 760 1032 780 1055 820 1070 850 1090 885 1112 930 1122 970 1132 1010 1142 1050 1156 1080 1165 1155 1164 1180 1140 1205 1105 1222 1095 1236 1064 1245 1083 1265 1078 1285 1050 1300 1030 1312 998 1325 985 1350 985 1355 968 1376 970"/>
            <path stroke="#74ac36" d="M287 790L295 782 312 775 315 760 318 785 330 810 345 850 358 876 380 895 405 920 415 912 440 938 450 952 468 970 485 968 488 986 508 988 515 1005 530 1015 545 1024 554 1045 562 1028 600 1035 640 1040 680 1052 694 1071 706 1016 722 1017 745 1025 760 1038 770 1060 800 1072 820 1080 845 1100 885 1120 925 1126 932 1138 945 1122 953 1140 975 1138 985 1148 1010 1140 1030 1158 1055 1160 1070 1177 1100 1170 1145 1162 1165 1140 1180 1110 1205 1065 1215 1075 1236 1011 1245 1060 1260 1055 1280 1020 1300 1000 1310 953 1325 940 1345 945 1348 962 1357 928 1367 935 1376 950V938"/>
            <path stroke="#a1241f" d="M287 776L330 775 345 785 365 820 385 850 410 882 440 905 470 938 505 962 535 990 562 1015 600 1026 640 1036 695 1046 705 1052 720 1037 745 1028 765 1028 785 1040 810 1052 838 1060 860 1078 885 1095 910 1110 950 1118 970 1128 1010 1138 1050 1150 1075 1160 1100 1164 1155 1165 1175 1158 1192 1148 1202 1125 1225 1105 1243 1080 1270 1080 1290 1065 1305 1045 1315 1020 1335 995 1355 985 1376 972"/>
          </g>
          <g class="axis" fill="#666" font-size="23.5"><text x="1885" y="1610.5" text-anchor="end">35</text><text x="1885" y="1692.5" text-anchor="end">30</text><text x="1885" y="1775" text-anchor="end">25</text><text x="1885" y="1857" text-anchor="end">20</text><text x="2095.5" y="1891" text-anchor="middle">3:00</text><text x="2295" y="1891" text-anchor="middle">9:00</text></g>
        </svg>
      </article>
    </div>
  </section>
</main>
<div class="edge"></div>
</body>
</html>
```
FILE: styles.css
```css
* { box-sizing: border-box; }
html, body { height: 2630px; overflow: hidden; }
body {
  margin: 0;
  display: flex;
  font: 400 28px/32px Roboto, "Liberation Sans", sans-serif;
  color: #3e5373;
  background: #f0f5fe;
}
.sprite { position: absolute; width: 0; height: 0; }
.icon { width: 48px; height: 48px; fill: currentColor; flex: none; display: block; }
.icon.big { width: 80px; height: 80px; fill: #000; }

/* Sidebar */
.sidebar {
  width: 128px;
  flex: none;
  display: flex;
  flex-direction: column;
  border-right: 2px solid #d9dfeb;
}
.sidebar-top { height: 130px; padding: 40px 0 0 38px; border-bottom: 2px solid #d9dfeb; }
.nav { display: flex; flex-direction: column; gap: 16px; padding: 16px 0 0 14px; }
.nav-item { width: 96px; height: 80px; display: flex; align-items: center; justify-content: center; border-radius: 8px; }
.nav-item.active { background: #e4e8f1; color: #8f9090; }
.nav-tools { margin-top: auto; padding: 0 0 36px 14px; }
.user { height: 242px; border-top: 2px solid #d9dfeb; padding: 44px 0 0 22px; }
.user .icon { margin-left: 16px; }
.avatar {
  margin-top: 24px;
  width: 80px;
  height: 80px;
  border-radius: 50%;
  background: #6781ae;
  display: flex;
  align-items: center;
  justify-content: center;
  font-size: 32px;
}

/* Header */
.main { flex: 1; min-width: 0; }
.header { height: 224px; background: #99abc7; color: #fff; }
.toolbar { height: 128px; display: flex; align-items: center; justify-content: space-between; padding: 0 48px 0 158px; }
.title { margin: 2px 0 0; font-size: 40px; font-weight: 400; line-height: 48px; }
.tabs { display: flex; gap: 6.9px; height: 96px; padding-left: 134px; }
.tab {
  height: 96px;
  padding: 0 24px;
  display: flex;
  align-items: center;
  color: #e9edf4;
  font-weight: 500;
}
.tab.label { padding-top: 2px; }
.tab.selected { color: #fff; box-shadow: inset 0 -4px #fff; }

/* Sensor badges */
.badges { height: 244px; padding: 24px 2px 0 0; display: flex; justify-content: center; }
.badge { width: 113.4px; display: flex; flex-direction: column; align-items: center; }
.circle {
  position: relative;
  width: 96px;
  height: 96px;
  border: 4px solid #f18f8b;
  border-radius: 50%;
  background: #fff;
  font-size: 32px;
  line-height: 86px;
  text-align: center;
}
.circle.small { font-size: 24px; }
.unit {
  position: absolute;
  left: 20px;
  bottom: -16px;
  width: 50px;
  height: 32px;
  border-radius: 16px;
  background: #f18f8b;
  color: #fff;
  font-size: 17px;
  line-height: 32px;
}
.badge-name { margin-top: 21px; font-size: 21.6px; line-height: 26px; text-align: center; }

/* Cards */
.columns { display: grid; grid-template-columns: 542px 540px 542px 540px; gap: 16px; padding-left: 14px; align-items: start; }
.column { display: flex; flex-direction: column; gap: 16px; }
.card {
  background: #fff;
  border-radius: 8px;
  overflow: hidden;
  box-shadow: 0 4px 4px rgba(0, 0, 0, .14), 0 2px 10px rgba(0, 0, 0, .12), 0 6px 2px -4px rgba(0, 0, 0, .2);
}
.card-title {
  margin: 0;
  padding: 48px 32px 32px;
  font-size: 48px;
  font-weight: 400;
  line-height: 64px;
  letter-spacing: -.012em;
}
.rows { display: flex; flex-direction: column; gap: 16px; padding: 0 32px 48px; }
.row { display: flex; align-items: center; min-height: 80px; }
.badge-icon { width: 80px; flex: none; display: flex; justify-content: center; }
.name, .state { white-space: nowrap; margin-top: 1px; margin-bottom: -1px; }
.name { margin-left: 32px; flex: 1; }
.state { text-align: right; }

.windy-map { display: block; width: 100%; height: 542px; }
.places { font-family: Inter, "Liberation Sans", sans-serif; font-weight: 300; }
.ui { font-family: Inter, "Liberation Sans", sans-serif; font-weight: 400; }
.windy-name { font-family: Lato, "Liberation Sans", sans-serif; }

.picture { display: grid; height: 304px; }
.picture > * { grid-area: 1 / 1; }
.radar-map { display: block; width: 100%; height: 304px; }
.map-labels { font-family: "Liberation Sans", sans-serif; font-weight: 700; fill: #15120a; letter-spacing: -.7px; }
.picture-footer {
  align-self: end;
  z-index: 1;
  height: 96px;
  padding: 0 32px;
  display: flex;
  align-items: center;
  justify-content: space-between;
  background: rgba(0, 0, 0, .3);
  color: #fff;
  font-size: 32px;
}

/* Weather */
.weather { height: 800px; }
.current { height: 195px; display: flex; align-items: flex-start; padding: 0 0 0 60px; }
.cloud-icon { width: 168px; height: 151px; margin-top: 15px; flex: none; filter: drop-shadow(0 16px 12px rgba(0, 0, 0, .05)); }
.temp { margin-left: -13px; margin-top: 45px; font-size: 112px; line-height: 112px; font-weight: 300; }
.deg { margin-left: 13px; margin-top: 41px; font-size: 42px; line-height: 50px; font-weight: 300; }
.details { padding-left: 28px; font-weight: 300; }
.detail { height: 48px; display: flex; align-items: center; gap: 15.5px; }
.detail.first { padding-left: 28px; }
.detail.tight { gap: 9px; }
.detail small { font-size: 22.4px; }
.forecast { margin: 29px 0 0 26px; width: 487px; display: grid; grid-template-columns: repeat(5, 1fr); }
.day { height: 212px; display: flex; flex-direction: column; align-items: center; border-right: 2px solid #d9d9d9; }
.day:last-child { border-right-color: transparent; }
.day-name { margin: 13px 6px 0 0; }
.day-icon { width: 75px; height: 54px; margin: 31px 3px 0 0; filter: drop-shadow(0 6px 4px rgba(0, 0, 0, .06)); }
.day-icon.sun { margin-right: 9px; }
.day b { margin-top: 39px; }

/* Graph */
.graph { height: 658px; }
.legend {
  display: grid;
  grid-template-columns: 70px 195px 194px;
  grid-auto-rows: 38px;
  height: 94px;
  padding: 20px 0 0 49px;
  align-items: center;
}
.legend-unit { grid-row: 1 / 3; align-self: start; margin-top: 9px; }
.legend-item { display: flex; align-items: center; gap: 15px; }
.dot { width: 20px; height: 20px; border-radius: 50%; }
.red { background: #c67b76; }
.green { background: #aacd86; }
.teal { background: #95cdce; }
.purple { background: #9a78ca; }
.plot { display: block; width: 540px; height: 356px; }
.axis { font-family: "Liberation Sans", sans-serif; }

/* Strip of the desktop past the window border */
.edge {
  width: 4px;
  flex: none;
  border-left: 1px solid #0b0d0e;
  background: linear-gradient(#10181a 0 524px, #a4aba8 524px 1022px, #9c3b5c 1022px 1038px, #a4aba8 1038px 1072px, #3f8244 1072px 1128px, #a4aba8 1128px);
}
```
